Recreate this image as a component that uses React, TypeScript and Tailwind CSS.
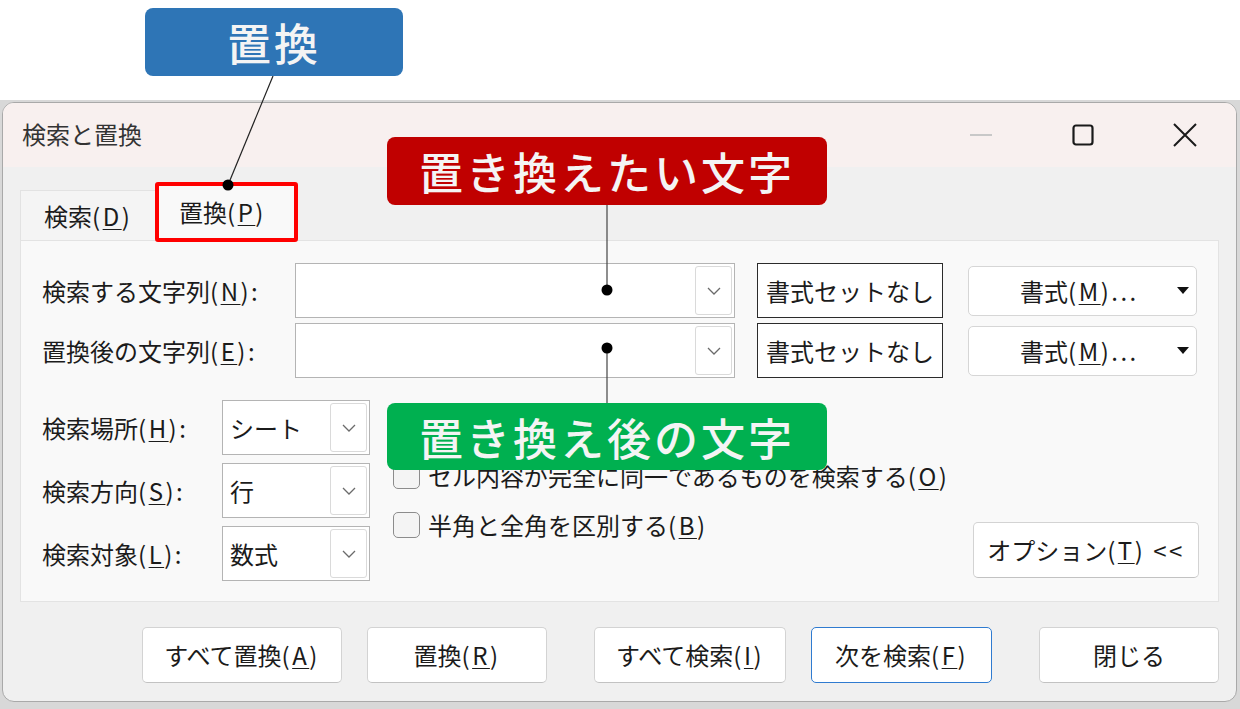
import React from 'react';

const jp = "font-['Noto_Sans_CJK_JP','Noto_Sans',sans-serif]";

// ニーモニック付きラベル（下線の文字）
const Mn = ({ t, k, after = '' }: { t: string; k: string; after?: string }) => (
    <>
        {t}
        <span className="tracking-[2.5px]">
            (<u className="underline underline-offset-[3px] decoration-1">{k}</u>){after}
        </span>
    </>
);

const Chevron = () => (
    <svg width="14" height="8" viewBox="0 0 14 8" fill="none">
        <path d="M1 1 L7 7 L13 1" stroke="#6b6b6b" strokeWidth="1.3" />
    </svg>
);

const Combo = ({ w, value }: { w: string; value?: string }) => (
    <div className={`${w} h-[55px] shrink-0 bg-white border border-[#b4b4b4] flex items-center pl-[7px] pr-[2px]`}>
        <span className="flex-1 text-[24px] leading-none">{value}</span>
        <div className="w-[37px] h-[49px] border border-[#dadada] rounded-[3px] flex items-center justify-center">
            <Chevron />
        </div>
    </div>
);

const Btn = ({ w, children, primary }: { w: string; children: React.ReactNode; primary?: boolean }) => (
    <div
        className={`${w} h-[56px] shrink-0 bg-white rounded-[5px] flex items-center justify-center text-[24px] leading-none ${
            primary ? 'border-[1.5px] border-[#2f7bd0]' : 'border border-[#d3d3d3] border-b-[#c2c2c2]'
        }`}
    >
        {children}
    </div>
);

const Check = ({ children }: { children?: React.ReactNode }) => (
    <div className="h-[49px] flex items-center gap-[8px]">
        <div className="w-[27px] h-[26px] rounded-[5px] border-[1.5px] border-[#8c8c8c] bg-[#f4f4f4]" />
        <span className="text-[24px] leading-none">{children}</span>
    </div>
);

const Dialog = () => (
    <div className="w-[1235px] h-[600px] bg-[#f0f0f0] rounded-[12px] border border-[#a9a9a9] overflow-hidden flex flex-col text-[#1b1b1b]">
        {/* タイトルバー */}
        <div className="h-[64px] shrink-0 bg-[#f8f0ef] flex items-center">
            <div className="pl-[19px] pb-[3px] text-[24px] leading-none text-[#333] flex-1">検索と置換</div>
            <div className="w-[102px] h-full flex items-center justify-center">
                <div className="w-[22px] h-[1.5px] bg-[#c8c8c8]" />
            </div>
            <div className="w-[102px] h-full flex items-center justify-center">
                <svg width="22" height="22" viewBox="0 0 22 22">
                    <rect x="1.5" y="1.5" width="19" height="19" rx="2.5" fill="none" stroke="#1a1a1a" strokeWidth="2.2" />
                </svg>
            </div>
            <div className="w-[102px] h-full flex items-center justify-center">
                <svg width="24" height="24" viewBox="0 0 24 24">
                    <path d="M1 1 L23 23 M23 1 L1 23" stroke="#1a1a1a" strokeWidth="2" />
                </svg>
            </div>
        </div>

        {/* タブ */}
        <div className="h-[73px] shrink-0 flex items-end pl-[17px]">
            <div className="w-[137px] h-[50px] bg-[#f4f4f4] border-t border-l border-[#e2e2e2] flex items-center pl-[23px] text-[24px] leading-none">
                <Mn t="検索" k="D" />
            </div>
            <div className="w-[141px] h-[56px] bg-[#f9f9f9] flex items-center pl-[22px] text-[24px] leading-none">
                <Mn t="置換" k="P" />
            </div>
        </div>

        {/* タブの中身 */}
        <div className="mx-[17px] h-[362px] shrink-0 bg-[#f9f9f9] border border-[#e3e3e3] pl-[21px] pt-[22px]">
            {[['検索する文字列', 'N'], ['置換後の文字列', 'E']].map(([t, k], i) => (
                <div key={k} className={`flex items-center h-[55px] ${i === 1 ? 'mt-[5px]' : ''}`}>
                    <div className="w-[253px] shrink-0 text-[24px] leading-none">
                        <Mn t={t} k={k} after=":" />
                    </div>
                    <Combo w="w-[440px]" />
                    <div className="ml-[22px] w-[186px] h-[55px] shrink-0 bg-white border-[1.5px] border-[#2b2b2b] flex items-center justify-center text-[24px] leading-none">
                        書式セットなし
                    </div>
                    <div className="ml-[25px] w-[229px] h-[50px] shrink-0 bg-white border border-[#d6d6d6] rounded-[5px] flex items-center justify-between pl-[51px] pr-[7px] text-[24px] leading-none">
                        <span>
                            <Mn t="書式" k="M" after="..." />
                        </span>
                        <svg width="12" height="7" viewBox="0 0 12 7">
                            <path d="M0 0 H12 L6 7 Z" fill="#111" />
                        </svg>
                    </div>
                </div>
            ))}

            <div className="mt-[22px] flex">
                <div className="flex flex-col gap-[8px]">
                    {[
                        ['検索場所', 'H', 'シート'],
                        ['検索方向', 'S', '行'],
                        ['検索対象', 'L', '数式'],
                    ].map(([t, k, v]) => (
                        <div key={k} className="flex items-center">
                            <div className="w-[180px] text-[24px] leading-none">
                                <Mn t={t} k={k} after=":" />
                            </div>
                            <Combo w="w-[148px]" value={v} />
                        </div>
                    ))}
                </div>
                <div className="ml-[23px] pt-[2px] flex flex-col">
                    {/* 1行目は注釈ラベルの下に隠れている */}
                    <div className="h-[49px]" />
                    <Check>
                        <Mn t="セル内容が完全に同一であるものを検索する" k="O" />
                    </Check>
                    <Check>
                        <Mn t="半角と全角を区別する" k="B" />
                    </Check>
                </div>
                <div className="ml-auto mr-[19px] self-end mb-[3px]">
                    <Btn w="w-[226px]">
                        <Mn t="オプション" k="T" after=" <<" />
                    </Btn>
                </div>
            </div>
        </div>

        {/* 下のボタン */}
        <div className="mt-[25px] flex pl-[139px]">
            <Btn w="w-[200px]">
                <Mn t="すべて置換" k="A" />
            </Btn>
            <div className="ml-[25px]">
                <Btn w="w-[180px]">
                    <Mn t="置換" k="R" />
                </Btn>
            </div>
            <div className="ml-[47px]">
                <Btn w="w-[192px]">
                    <Mn t="すべて検索" k="I" />
                </Btn>
            </div>
            <div className="ml-[25px]">
                <Btn w="w-[181px]" primary>
                    <Mn t="次を検索" k="F" />
                </Btn>
            </div>
            <div className="ml-[47px]">
                <Btn w="w-[180px]">閉じる</Btn>
            </div>
        </div>
    </div>
);

export default function App() {
    return (
        <div className={`relative w-[1240px] h-[709px] bg-white overflow-hidden ${jp}`}>
            <div className="mt-[100px] h-[609px] bg-[#d8d8d8] pl-[2px] pt-[2px]">
                <Dialog />
            </div>

            {/* 注釈 */}
            <div className="absolute left-[155px] top-[182px] w-[143px] h-[60px] border-4 border-[#ff0000] rounded-[3px]" />

            <svg className="absolute inset-0 pointer-events-none" width="1240" height="709">
                <line x1="273" y1="76" x2="228" y2="185" stroke="#222" strokeWidth="1.2" />
                <circle cx="228" cy="185" r="5.5" fill="#000" />
                <line x1="607" y1="205" x2="607" y2="290" stroke="#444" strokeWidth="1.2" />
                <circle cx="607" cy="290" r="5.5" fill="#000" />
                <line x1="607" y1="348" x2="607" y2="403" stroke="#444" strokeWidth="1.2" />
                <circle cx="607" cy="348" r="5.5" fill="#000" />
            </svg>

            <div className="absolute left-[145px] top-[8px] w-[258px] h-[68px] rounded-[8px] bg-[#2e75b6] flex items-center justify-center text-[#f4f4f4] text-[44px] font-medium leading-none tracking-[3px]">
                置換
            </div>
            <div className="absolute left-[387px] top-[137px] w-[440px] h-[68px] rounded-[8px] bg-[#c00000] flex items-center justify-center text-[#f4f4f4] text-[44px] font-medium leading-none tracking-[3px]">
                置き換えたい文字
            </div>
            <div className="absolute left-[387px] top-[403px] w-[440px] h-[67px] rounded-[8px] bg-[#00b050] flex items-center justify-center text-[#f4f4f4] text-[44px] font-medium leading-none tracking-[3px]">
                置き換え後の文字
            </div>
        </div>
    );
}
